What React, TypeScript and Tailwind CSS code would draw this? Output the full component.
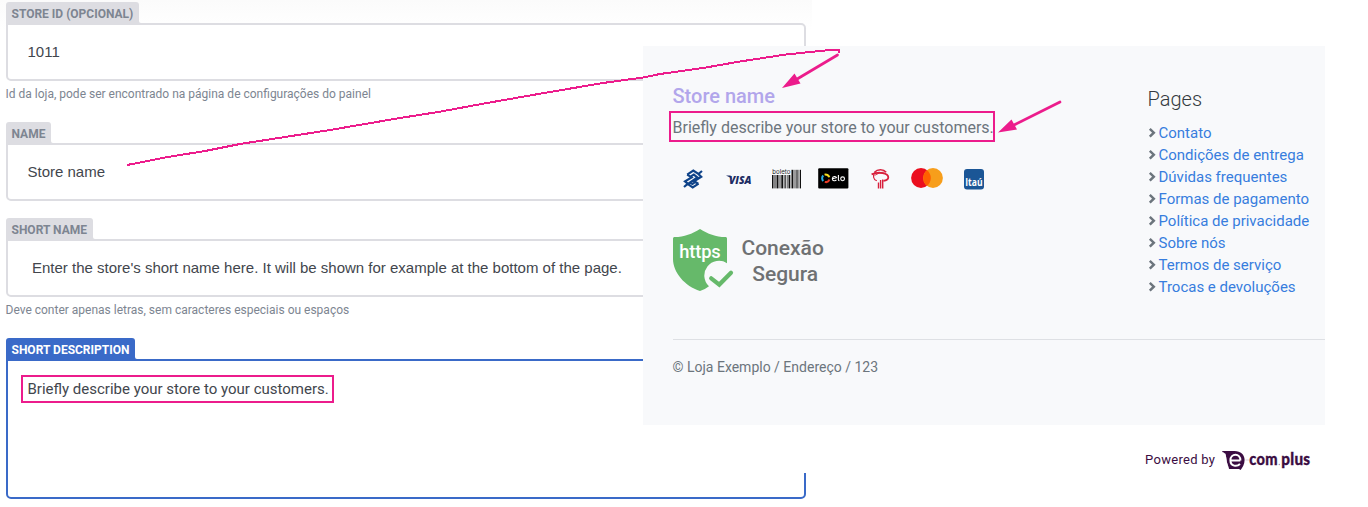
import React from "react";

type FieldProps = {
  label: string;
  help?: string;
  active?: boolean;
  className?: string;
  children?: React.ReactNode;
};

function Field({ label, help, active, className = "", children }: FieldProps) {
  const tab = active ? "bg-[#3a6ac8] text-white" : "bg-[#dddde2] text-[#7d8591]";
  const box = active ? "border-[#3a6ac8] h-[140px]" : "border-[#dddde2] h-[58px]";
  return (
    <div className={className}>
      <div className="flex items-end">
        <div className={`h-[21px] rounded-t-[3px] pl-[5.5px] pr-[6px] text-xs leading-[24px] font-bold whitespace-nowrap ${tab}`}>
          {label}
        </div>
        <svg width="2" height="2" className={active ? "text-[#3a6ac8]" : "text-[#dddde2]"}>
          <path d="M0 0Q0 2 2 2H0Z" fill="currentColor" />
        </svg>
      </div>
      <div className={`w-[800px] rounded-[5px] rounded-tl-none border-2 bg-white pl-[19.5px] text-[15px] text-[#42464d] ${box}`}>
        {children}
      </div>
      {help && <p className="-ml-[0.5px] h-[41px] text-xs leading-[26px] text-[#7d8591]">{help}</p>}
    </div>
  );
}

const pages = [
  "Contato",
  "Condições de entrega",
  "Dúvidas frequentes",
  "Formas de pagamento",
  "Política de privacidade",
  "Sobre nós",
  "Termos de serviço",
  "Trocas e devoluções",
];

function BancoDoBrasil() {
  return (
    <svg width="20" height="20" viewBox="0 0 20 20" fill="none" stroke="#0f4389" strokeWidth="2.2">
      <path d="M4.2 5.6 10.3 1.6 15.4 5 19 2M1 18 4.6 14.9 9.7 18.4 15.6 14.6" />
      <path d="M4.2 5.6 8.6 8.4 2 12.4 5 14.9 14.4 8.5 10.8 5.6 7.4 7.6" />
      <path d="M15.4 5 18.2 7.7 11 12.2 15.2 14.8M12.6 12.6 9.4 15 6.6 13.6" />
    </svg>
  );
}

function Visa() {
  return (
    <svg width="30" height="14" viewBox="0 0 30 14" className="overflow-visible">
      <text x="3" y="9.7" fontFamily="Open Sans, sans-serif" fontWeight="800" fontStyle="italic" fontSize="11.3" fill="#1d2c63" textLength="22.5" lengthAdjust="spacingAndGlyphs">VISA</text>
      <path d="M0 1.5H4.5L6 5.5Q4 2.8 0 1.5Z" fill="#1d2c63" />
    </svg>
  );
}

const bars: [number, number, number][] = [
  [0, 1.5, 6], [2.5, 1, 6], [4.5, 2, 6], [7.6, 0.8, 6], [9.3, 2, 6], [12.5, 1.2, 6], [14.8, 0.7, 6],
  [16.5, 1.8, 6], [19.5, 1.9, 0.8], [22.6, 0.8, 0.8], [24.4, 1.2, 0.8], [26.6, 0.7, 0.8], [28, 1, 0.8],
];

function Boleto() {
  return (
    <svg width="30" height="20" viewBox="0 0 30 20" className="overflow-visible">
      <text x="0.3" y="5.4" fontFamily="Inter, sans-serif" fontSize="6.8" fill="#222" textLength="18" lengthAdjust="spacingAndGlyphs">boleto</text>
      {bars.map(([x, w, y]) => (
        <rect key={x} x={x} y={y} width={w} height={19.4 - y} fill="#111" />
      ))}
    </svg>
  );
}

function Elo() {
  return (
    <svg width="31" height="21" viewBox="0 0 31 21">
      <rect x=".2" y=".3" width="30.2" height="20.3" rx="1" fill="#000" />
      <g fill="none" strokeWidth="2">
        <path d="M6.6 6.8A3.7 3.7 0 0 1 11.3 9.2" stroke="#f6df20" />
        <path d="M5.3 7.5A3.8 3.8 0 0 0 5.3 13" stroke="#28aee4" />
        <path d="M6.8 13.9A3.7 3.7 0 0 0 11.3 11.5" stroke="#eb3b27" />
      </g>
      <g fill="none" stroke="#fff" strokeWidth="1.1">
        <path d="M14.3 10.7 18.5 9.7C18 8 14.6 8 14.3 10.7C14.3 13.1 17.4 13.2 18.4 11.9" />
        <path d="M20.4 7V11.7Q20.4 12.5 21.4 12.6" />
        <circle cx="24.6" cy="10.8" r="1.9" />
      </g>
    </svg>
  );
}

function Bradesco() {
  return (
    <svg width="19" height="21" viewBox="0 0 19 21" fill="none" stroke="#d8203c">
      <path d="M3.5 4.2C6.5 1 12.5 1 15.2 4.2" strokeWidth="1.5" />
      <path d="M.6 6.3C7.5 3.4 17.3 4.8 17.3 9.3C17.3 11.4 15.5 12.6 12.4 12.8" strokeWidth="1.8" />
      <path d="M4.2 4C1.6 7.6 2 11.4 5.8 12.8" strokeWidth="1.2" />
      <path d="M3.6 7.4Q9 3.8 14.3 3.8" strokeWidth=".9" />
      <path d="M7.5 14.4V20.6M9.6 12V20.6M11.7 11.4V20.6" strokeWidth="1.4" />
    </svg>
  );
}

function Mastercard() {
  return (
    <svg width="33" height="20" viewBox="0 0 33 20">
      <circle cx="10" cy="10" r="9.9" fill="#eb0e1e" />
      <circle cx="22" cy="10" r="9.9" fill="#f79e1b" />
      <path d="M16 2.2A9.9 9.9 0 0 1 16 17.8A9.9 9.9 0 0 1 16 2.2Z" fill="#ff5f00" />
    </svg>
  );
}

function Itau() {
  return (
    <svg width="20" height="21" viewBox="0 0 20 21">
      <rect width="20" height="20.6" rx="3" fill="#1b5696" />
      <text x="1.2" y="17.2" fontFamily="Open Sans, sans-serif" fontWeight="700" fontSize="10" fill="#fff" textLength="17.4" lengthAdjust="spacingAndGlyphs">Itaú</text>
    </svg>
  );
}

function SecureShield() {
  return (
    <svg width="61" height="63" viewBox="0 0 61 63">
      <path d="M27 0C35 4.9 43 8.2 52.8 8.1Q54 8.1 54 9.6V34.2A14.7 14.7 0 0 0 36 57.3Q32 60.6 27 62C12 57.3 0 43.5 0 30V9.6Q0 8.1 1.3 8.1C11 8.2 19 4.9 27 0Z" fill="#66b96a" />
      <path d="M38.2 49.3 46.3 55.6 58 43.8" fill="none" stroke="#66b96a" strokeWidth="4.2" strokeLinecap="round" />
      <text x="6.2" y="28.6" fontFamily="Roboto, sans-serif" fontWeight="500" fontSize="18.3" fill="#fff" textLength="41.5">https</text>
    </svg>
  );
}

function EcomPlus() {
  return (
    <svg width="91" height="24" viewBox="0 0 91 24" className="overflow-visible">
      <path d="M.3 2H12.5C18.7 2 22.6 5.8 22.6 11C22.6 15.4 20.4 18.4 18.6 21L17 20H7.2Q5 16 4.2 8Q3.5 3.6.3 3Z" fill="#3b0d42" />
      <path d="M3 4.5Q4 14 6.3 18.7" fill="none" stroke="#fff" strokeWidth=".8" />
      <path d="M18.3 11.4H8.6M18.4 11.4C18.6 3.6 8.4 4.1 8.4 11.3C8.4 17.6 15 17.9 18 15" fill="none" stroke="#fff" strokeWidth="2" />
      <path d="M23.5 11H27" stroke="#ddd3df" />
      <text x="27.3" y="15.9" fontFamily="Lato, sans-serif" fontWeight="900" fontSize="16" fill="#3b0d42" stroke="#3b0d42" strokeWidth=".3" textLength="28.5" lengthAdjust="spacingAndGlyphs">com</text>
      <circle cx="57.3" cy="15.5" r=".7" fill="#a58ba9" />
      <text x="59.2" y="15.9" fontFamily="Lato, sans-serif" fontWeight="900" fontSize="16" fill="#3b0d42" stroke="#3b0d42" strokeWidth=".3" textLength="29.2" lengthAdjust="spacingAndGlyphs">plus</text>
    </svg>
  );
}

function StoreFooter() {
  return (
    <div className="absolute left-[643px] top-[46px] h-[427px] w-[725px] bg-white">
      <div className="h-[379px] w-[682px] bg-[#f8f9fb] pl-[29.5px]">
        <div className="flex h-[293px]">
          <div className="w-[475px] pt-[35px]">
            <h2 className="h-[31px] text-xl leading-[30px] font-medium text-[#b2a6eb]">Store name</h2>
            <p className="h-[32px] text-base leading-[31px] text-[#6c757d]">Briefly describe your store to your customers.</p>
            <div className="flex h-[70px] pl-[10px] pt-[25px]">
              <div className="w-[43px]"><BancoDoBrasil /></div>
              <div className="w-[46px] pt-[5px]"><Visa /></div>
              <div className="w-[46.5px]"><Boleto /></div>
              <div className="w-[53px] -mt-px"><Elo /></div>
              <div className="w-[40px] -mt-px"><Bradesco /></div>
              <div className="w-[53px] -mt-px"><Mastercard /></div>
              <div><Itau /></div>
            </div>
            <div className="flex pl-[0.5px] pt-[15px]">
              <SecureShield />
              <p className="ml-[7.5px] mt-[6px] text-center text-[21px] leading-[26px] font-medium text-[#6f7173]">
                Conexão<br /><span className="ml-[5px]">Segura</span>
              </p>
            </div>
          </div>
          <div className="pt-[38px]">
            <h3 className="h-[38px] text-xl leading-[30px] font-light text-[#343a40]">Pages</h3>
            <ul>
              {pages.map((page) => (
                <li key={page} className="flex h-[22px] items-center text-[15px] leading-[22px] whitespace-nowrap text-[#377dde]">
                  <svg width="11" height="12" viewBox="0 0 11 12">
                    <path d="M1.8 1.8 5.8 5.7 1.8 9.6" fill="none" stroke="#6c757d" strokeWidth="2.5" />
                  </svg>
                  {page}
                </li>
              ))}
            </ul>
          </div>
        </div>
        <div className="ml-[0.5px] border-t border-[#dee0e4] pt-4 text-sm leading-[23px] text-[#6c757d]">
          <span className="-ml-[0.5px]">© Loja Exemplo / Endereço / 123</span>
        </div>
      </div>
      <div className="flex h-[48px] items-start pl-[502px] pt-[24px] text-[13px] leading-[22px] tracking-[0.3px] text-[#3b0d42]">
        <span className="w-[77px] whitespace-nowrap">Powered by</span>
        <EcomPlus />
      </div>
    </div>
  );
}

function Annotations() {
  return (
    <svg className="absolute left-0 top-0" width="1368" height="507" fill="none" stroke="#ec1c8c">
      <polyline shapeRendering="crispEdges" strokeWidth="2" points="127,165 168,157 205,151 240,144 330,130 400,118 438,112 487,103 547,92.5 603,83 643,77.5 660,74 703,68 740,61.5 786,54.5 830,50 839,50 839,53" />
      <path d="M837.5 55 798 78.5M1060 102 1014 125" strokeWidth="2.7" strokeLinecap="round" />
      <path d="M782 88 794.5 73.5 800.5 83.5ZM998 132.5 1011.5 119.5 1017 129.5Z" fill="#ec1c8c" stroke="none" />
      <rect x="22" y="376" width="311" height="26" strokeWidth="2" />
      <rect x="670" y="112" width="324" height="29" strokeWidth="2" />
    </svg>
  );
}

export default function App() {
  return (
    <main className="relative h-[507px] w-[1368px] overflow-hidden bg-white font-['Roboto',sans-serif]">
      <div className="h-full w-[812px] bg-linear-to-b from-[#fbfbfb] to-white to-[30px] pl-[6px] pt-[2px]">
        <Field label="STORE ID (OPCIONAL)" help="Id da loja, pode ser encontrado na página de configurações do painel">
          <p className="font-['Liberation_Sans',sans-serif] leading-[54px]">1011</p>
        </Field>
        <Field label="NAME" className="mb-[17px]">
          <p className="font-['Liberation_Sans',sans-serif] leading-[54px]">Store name</p>
        </Field>
        <Field label="SHORT NAME" help="Deve conter apenas letras, sem caracteres especiais ou espaços">
          <p className="pl-[4.5px] font-['Liberation_Sans',sans-serif] leading-[54px]">
            Enter the store's short name here. It will be shown for example at the bottom of the page.
          </p>
        </Field>
        <Field label="SHORT DESCRIPTION" active>
          <p className="leading-[56px]">Briefly describe your store to your customers.</p>
        </Field>
      </div>
      <StoreFooter />
      <Annotations />
    </main>
  );
}
